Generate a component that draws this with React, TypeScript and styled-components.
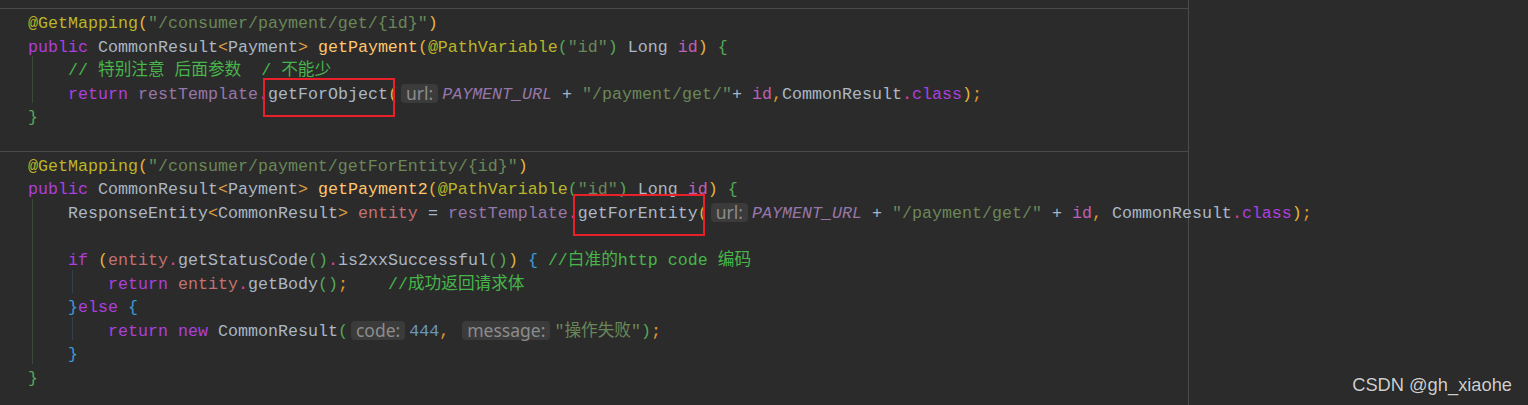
import styled, { createGlobalStyle } from "styled-components";

// 编辑器配色（接近 IntelliJ Darcula + 彩虹括号）
const palette = {
  ann: "#bbb529",
  kw: "#ad3fdf",
  type: "#a9b7c6",
  angle: "#e0a040",
  decl: "#ffc66d",
  field: "#9876aa",
  dot: "#e0409a",
  str: "#6a8759",
  cmt: "#47b54a",
  param: "#c05fb6",
  local: "#c27272",
  num: "#6897bb",
  punct: "#e09a2a",
  p1: "#e5b43c",
  p2: "#54a857",
  b1: "#54a857",
  b2: "#3b9ad9",
  op: "#a9b7c6",
};

type Kind = keyof typeof palette;

const GlobalStyle = createGlobalStyle`
  html, body {
    margin: 0;
    padding: 0;
    background: #2b2b2b;
  }
`;

function App() {
  return (
    <Screen>
      <GlobalStyle />
      <Editor>
        <Method>
          <Line>
            <T $k="ann">@GetMapping</T>
            <T $k="p1">(</T>
            <T $k="str">"/consumer/payment/get/{"{id}"}"</T>
            <T $k="p1">)</T>
          </Line>
          <Line>
            <T $k="kw">public</T> <T $k="type">CommonResult</T>
            <T $k="angle">&lt;</T>
            <T $k="type">Payment</T>
            <T $k="angle">&gt;</T> <T $k="decl">getPayment</T>
            <T $k="p1">(</T>
            <T $k="ann">@PathVariable</T>
            <T $k="p2">(</T>
            <T $k="str">"id"</T>
            <T $k="p2">)</T> <T $k="type">Long</T> <T $k="param">id</T>
            <T $k="p1">)</T> <T $k="b1">{"{"}</T>
          </Line>
          <Scope $guide="#3a4a3a">
            <Line>
              <T $k="cmt">// 特别注意 后面参数  / 不能少</T>
            </Line>
            <Line>
              <T $k="kw">return</T> <T $k="field">restTemplate</T>
              <T $k="dot">.</T>
              <Marked $top={-7} $height={39}>
                getForObject
              </Marked>
              <T $k="p1">(</T>
              <Hint>url:</Hint>
              <T $k="field" $italic>
                PAYMENT_URL
              </T>{" "}
              <T $k="op">+</T> <T $k="str">"/payment/get/"</T>
              <T $k="op">+</T> <T $k="param">id</T>
              <T $k="punct">,</T>
              <T $k="type">CommonResult</T>
              <T $k="dot">.</T>
              <T $k="kw">class</T>
              <T $k="p1">)</T>
              <T $k="punct">;</T>
            </Line>
          </Scope>
          <Line>
            <T $k="b1">{"}"}</T>
          </Line>
          <Line />
        </Method>

        <Method>
          <Line>
            <T $k="ann">@GetMapping</T>
            <T $k="p1">(</T>
            <T $k="str">"/consumer/payment/getForEntity/{"{id}"}"</T>
            <T $k="p1">)</T>
          </Line>
          <Line>
            <T $k="kw">public</T> <T $k="type">CommonResult</T>
            <T $k="angle">&lt;</T>
            <T $k="type">Payment</T>
            <T $k="angle">&gt;</T> <T $k="decl">getPayment2</T>
            <T $k="p1">(</T>
            <T $k="ann">@PathVariable</T>
            <T $k="p2">(</T>
            <T $k="str">"id"</T>
            <T $k="p2">)</T> <T $k="type">Long</T> <T $k="param">id</T>
            <T $k="p1">)</T> <T $k="b1">{"{"}</T>
          </Line>
          <Scope $guide="#3a4a3a">
            <Line>
              <T $k="type">ResponseEntity</T>
              <T $k="angle">&lt;</T>
              <T $k="type">CommonResult</T>
              <T $k="angle">&gt;</T> <T $k="local">entity</T>{" "}
              <T $k="op">=</T> <T $k="field">restTemplate</T>
              <T $k="dot">.</T>
              <Marked $top={-10} $height={42}>
                getForEntity
              </Marked>
              <T $k="p1">(</T>
              <Hint>url:</Hint>
              <T $k="field" $italic>
                PAYMENT_URL
              </T>{" "}
              <T $k="op">+</T> <T $k="str">"/payment/get/"</T>{" "}
              <T $k="op">+</T> <T $k="param">id</T>
              <T $k="punct">,</T> <T $k="type">CommonResult</T>
              <T $k="dot">.</T>
              <T $k="kw">class</T>
              <T $k="p1">)</T>
              <T $k="punct">;</T>
            </Line>
            <Line />
            <Line>
              <T $k="kw">if</T> <T $k="p1">(</T>
              <T $k="local">entity</T>
              <T $k="dot">.</T>
              <T $k="type">getStatusCode</T>
              <T $k="p2">()</T>
              <T $k="dot">.</T>
              <T $k="type">is2xxSuccessful</T>
              <T $k="p2">()</T>
              <T $k="p1">)</T> <T $k="b2">{"{"}</T>{" "}
              <T $k="cmt">//白准的http code 编码</T>
            </Line>
            <Scope $guide="#33414f">
              <Line>
                <T $k="kw">return</T> <T $k="local">entity</T>
                <T $k="dot">.</T>
                <T $k="type">getBody</T>
                <T $k="p2">()</T>
                <T $k="punct">;</T>
                {"    "}
                <T $k="cmt">//成功返回请求体</T>
              </Line>
            </Scope>
            <Line>
              <T $k="b2">{"}"}</T>
              <T $k="kw">else</T> <T $k="b2">{"{"}</T>
            </Line>
            <Scope $guide="#33414f">
              <Line>
                <T $k="kw">return</T> <T $k="kw">new</T>{" "}
                <T $k="type">CommonResult</T>
                <T $k="p2">(</T>
                <Hint>code:</Hint>
                <T $k="num">444</T>
                <T $k="punct">,</T> <Hint>message:</Hint>
                <T $k="str">"操作失败"</T>
                <T $k="p2">)</T>
                <T $k="punct">;</T>
              </Line>
            </Scope>
            <Line>
              <T $k="b2">{"}"}</T>
            </Line>
          </Scope>
          <Line>
            <T $k="b1">{"}"}</T>
          </Line>
        </Method>
      </Editor>
      <Watermark>CSDN @gh_xiaohe</Watermark>
    </Screen>
  );
}

export default App;

const Screen = styled.div`
  position: relative;
  height: 405px;
  width: 1528px;
  overflow: hidden;
  background: #2b2b2b;
`;

// 右侧的竖线就是编辑器的 right margin 参考线，文字可以越过它
const Editor = styled.div`
  box-sizing: border-box;
  width: 1189px;
  height: 405px;
  padding-top: 8px;
  border-right: 1px solid #4a4a4a;
  font-family: "Liberation Mono", "Noto Sans CJK SC", monospace;
  font-size: 16.67px;
  color: #a9b7c6;
`;

const Method = styled.section`
  border-top: 1px solid #4a4a4a;
  padding-left: 28px;
`;

const Scope = styled.div<{ $guide: string }>`
  margin-left: 4px;
  padding-left: 35px;
  border-left: 1px solid ${(props) => props.$guide};
`;

// 行高 23.6px，文字比行中心略靠下
const Line = styled.div`
  height: 23.6px;
  line-height: 29.6px;
  white-space: pre;
`;

const T = styled.span<{ $k: Kind; $italic?: boolean }>`
  color: ${(props) => palette[props.$k]};
  font-style: ${(props) => (props.$italic ? "italic" : "normal")};
`;

const Hint = styled.span`
  display: inline-block;
  margin: 0 4px 0 3px;
  padding: 0 5px;
  height: 19px;
  line-height: 19px;
  vertical-align: -1px;
  border-radius: 4px;
  background: #3b3b3b;
  color: #8c8c8c;
  font-family: "Noto Sans", sans-serif;
  font-size: 17.5px;
`;

// 截图里用红框标出来的方法名
const Marked = styled.span<{ $top: number; $height: number }>`
  position: relative;
  color: ${palette.type};

  &::after {
    content: "";
    position: absolute;
    left: -5px;
    right: -7px;
    top: ${(props) => props.$top}px;
    height: ${(props) => props.$height}px;
    border: 2px solid #e8202a;
    box-sizing: border-box;
  }
`;

const Watermark = styled.div`
  position: absolute;
  right: 16px;
  bottom: 9px;
  font-family: "Liberation Sans", Arial, sans-serif;
  font-size: 18.3px;
  color: #cfcfcf;
  text-shadow: 0 0 1px rgba(0, 0, 0, 0.6);
`;
